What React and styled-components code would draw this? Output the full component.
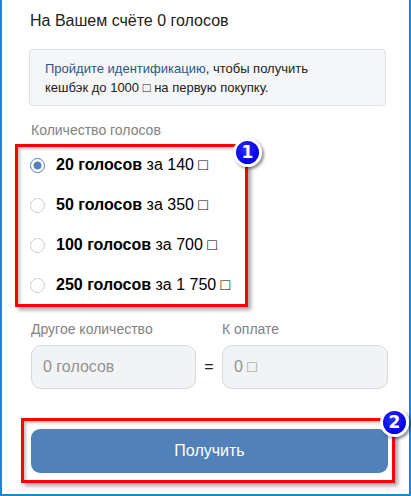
import React from 'react';
import styled, { createGlobalStyle } from "styled-components";

const Global = createGlobalStyle`
    body {
        margin : 0;
        background : #fff;
        font-family : "Liberation Sans", Arial, sans-serif;
    }
`;

const options = [
    { votes : "20 голосов", price : "за 140 □", checked : true },
    { votes : "50 голосов", price : "за 350 □" },
    { votes : "100 голосов", price : "за 700 □" },
    { votes : "250 голосов", price : "за 1 750 □" },
];

const App = () => {
    return (
        <Frame>
            <Global />
            <Title>На Вашем счёте 0 голосов</Title>
            <Info>
                <Link>Пройдите идентификацию</Link>, чтобы получить<br />
                кешбэк до 1000 □ на первую покупку.
            </Info>
            <Label>Количество голосов</Label>
            <Options>
                {options.map((o) => (
                    <Option key={o.votes}>
                        <Radio checked={o.checked} />
                        <b>{o.votes}</b>&nbsp;{o.price}
                    </Option>
                ))}
                <Marker $left={-14} $top={-1} $width={233} $height={163} />
                <Badge $left={204} $top={-7}>1</Badge>
            </Options>
            <Fields>
                <Label>Другое количество</Label>
                <span />
                <Label>К оплате</Label>
                <Field>0 голосов</Field>
                <Equals>=</Equals>
                <Field>0 □</Field>
            </Fields>
            <ButtonWrap>
                <Button>Получить</Button>
                <Marker $left={-10} $top={-11} $width={374} $height={65} />
                <Badge $left={349} $top={-21}>2</Badge>
            </ButtonWrap>
        </Frame>
    );
};

const Frame = styled.div`
    box-sizing : border-box;
    width : 411px;
    height : 496px;
    border : 2px solid #1a86d4;
    border-top : 0;
    padding : 11px 23px 0 27px;
    display : flex;
    flex-direction : column;
    color : #222;
`;
const Title = styled.div`
    font-size : 16px;
    line-height : 20px;
    margin-left : 1px;
`;
const Info = styled.div`
    margin-top : 18px;
    background : #f5f6f8;
    border : 1px solid #dce1e6;
    border-radius : 4px;
    padding : 9px 15px 8px;
    font-size : 13px;
    line-height : 19px;
    color : #222;
`;
const Link = styled.span`
    color : #2a5885;
`;
const Label = styled.div`
    font-size : 14px;
    line-height : 18px;
    color : #828282;
    margin-top : 15px;
    margin-left : 2px;
`;
const Options = styled.div`
    position : relative;
    margin-top : 6px;
    display : flex;
    flex-direction : column;
`;
const Option = styled.div`
    height : 40px;
    display : flex;
    align-items : center;
    font-size : 16px;
    color : #000;
    b {
        font-weight : bold;
    }
`;
const Radio = styled.span`
    box-sizing : border-box;
    width : 15px;
    height : 15px;
    margin : 0 11px 0 1px;
    border-radius : 50%;
    border : 1px solid ${p => p.checked ? "#5181b8" : "#c5d0db"};
    background : ${p => p.checked ? "radial-gradient(circle, #5181b8 0 3.5px, #fff 4.5px)" : "#fff"};
`;
const Marker = styled.div`
    position : absolute;
    left : ${p => p.$left}px;
    top : ${p => p.$top}px;
    width : ${p => p.$width}px;
    height : ${p => p.$height}px;
    box-sizing : border-box;
    border : 3px solid #ff0000;
    box-shadow : 3px 3px 4px rgba(0, 0, 0, 0.35), inset 2px 2px 3px rgba(0, 0, 0, 0.25);
    pointer-events : none;
`;
const Badge = styled.div`
    position : absolute;
    left : ${p => p.$left}px;
    top : ${p => p.$top}px;
    box-sizing : border-box;
    width : 29px;
    height : 29px;
    border-radius : 50%;
    border : 3px solid #fff;
    background : radial-gradient(circle at 40% 35%, #2a2aff, #0000e6 70%);
    box-shadow : 2px 2px 3px rgba(0, 0, 0, 0.45);
    color : #fff;
    font-family : "DejaVu Sans", sans-serif;
    font-weight : bold;
    font-size : 17px;
    line-height : 23px;
    text-align : center;
`;
const Fields = styled.div`
    display : grid;
    grid-template-columns : 165px 26px 166px;
    grid-template-rows : auto 44px;
    row-gap : 7px;
    margin-left : 2px;
    ${Label} {
        margin-left : 0;
    }
`;
const Field = styled.div`
    box-sizing : border-box;
    background : #f2f3f5;
    border : 1px solid #d3d9de;
    border-radius : 10px;
    padding : 0 11px;
    display : flex;
    align-items : center;
    font-size : 16px;
    color : #939393;
`;
const Equals = styled.div`
    display : flex;
    align-items : center;
    justify-content : center;
    font-size : 16px;
    color : #222;
`;
const ButtonWrap = styled.div`
    position : relative;
    margin : 40px 0 0 2px;
`;
const Button = styled.button`
    width : 357px;
    height : 44px;
    border : 0;
    border-radius : 9px;
    background : #5181b8;
    color : #fff;
    font-family : inherit;
    font-size : 16px;
    cursor : pointer;
`;

export default App
